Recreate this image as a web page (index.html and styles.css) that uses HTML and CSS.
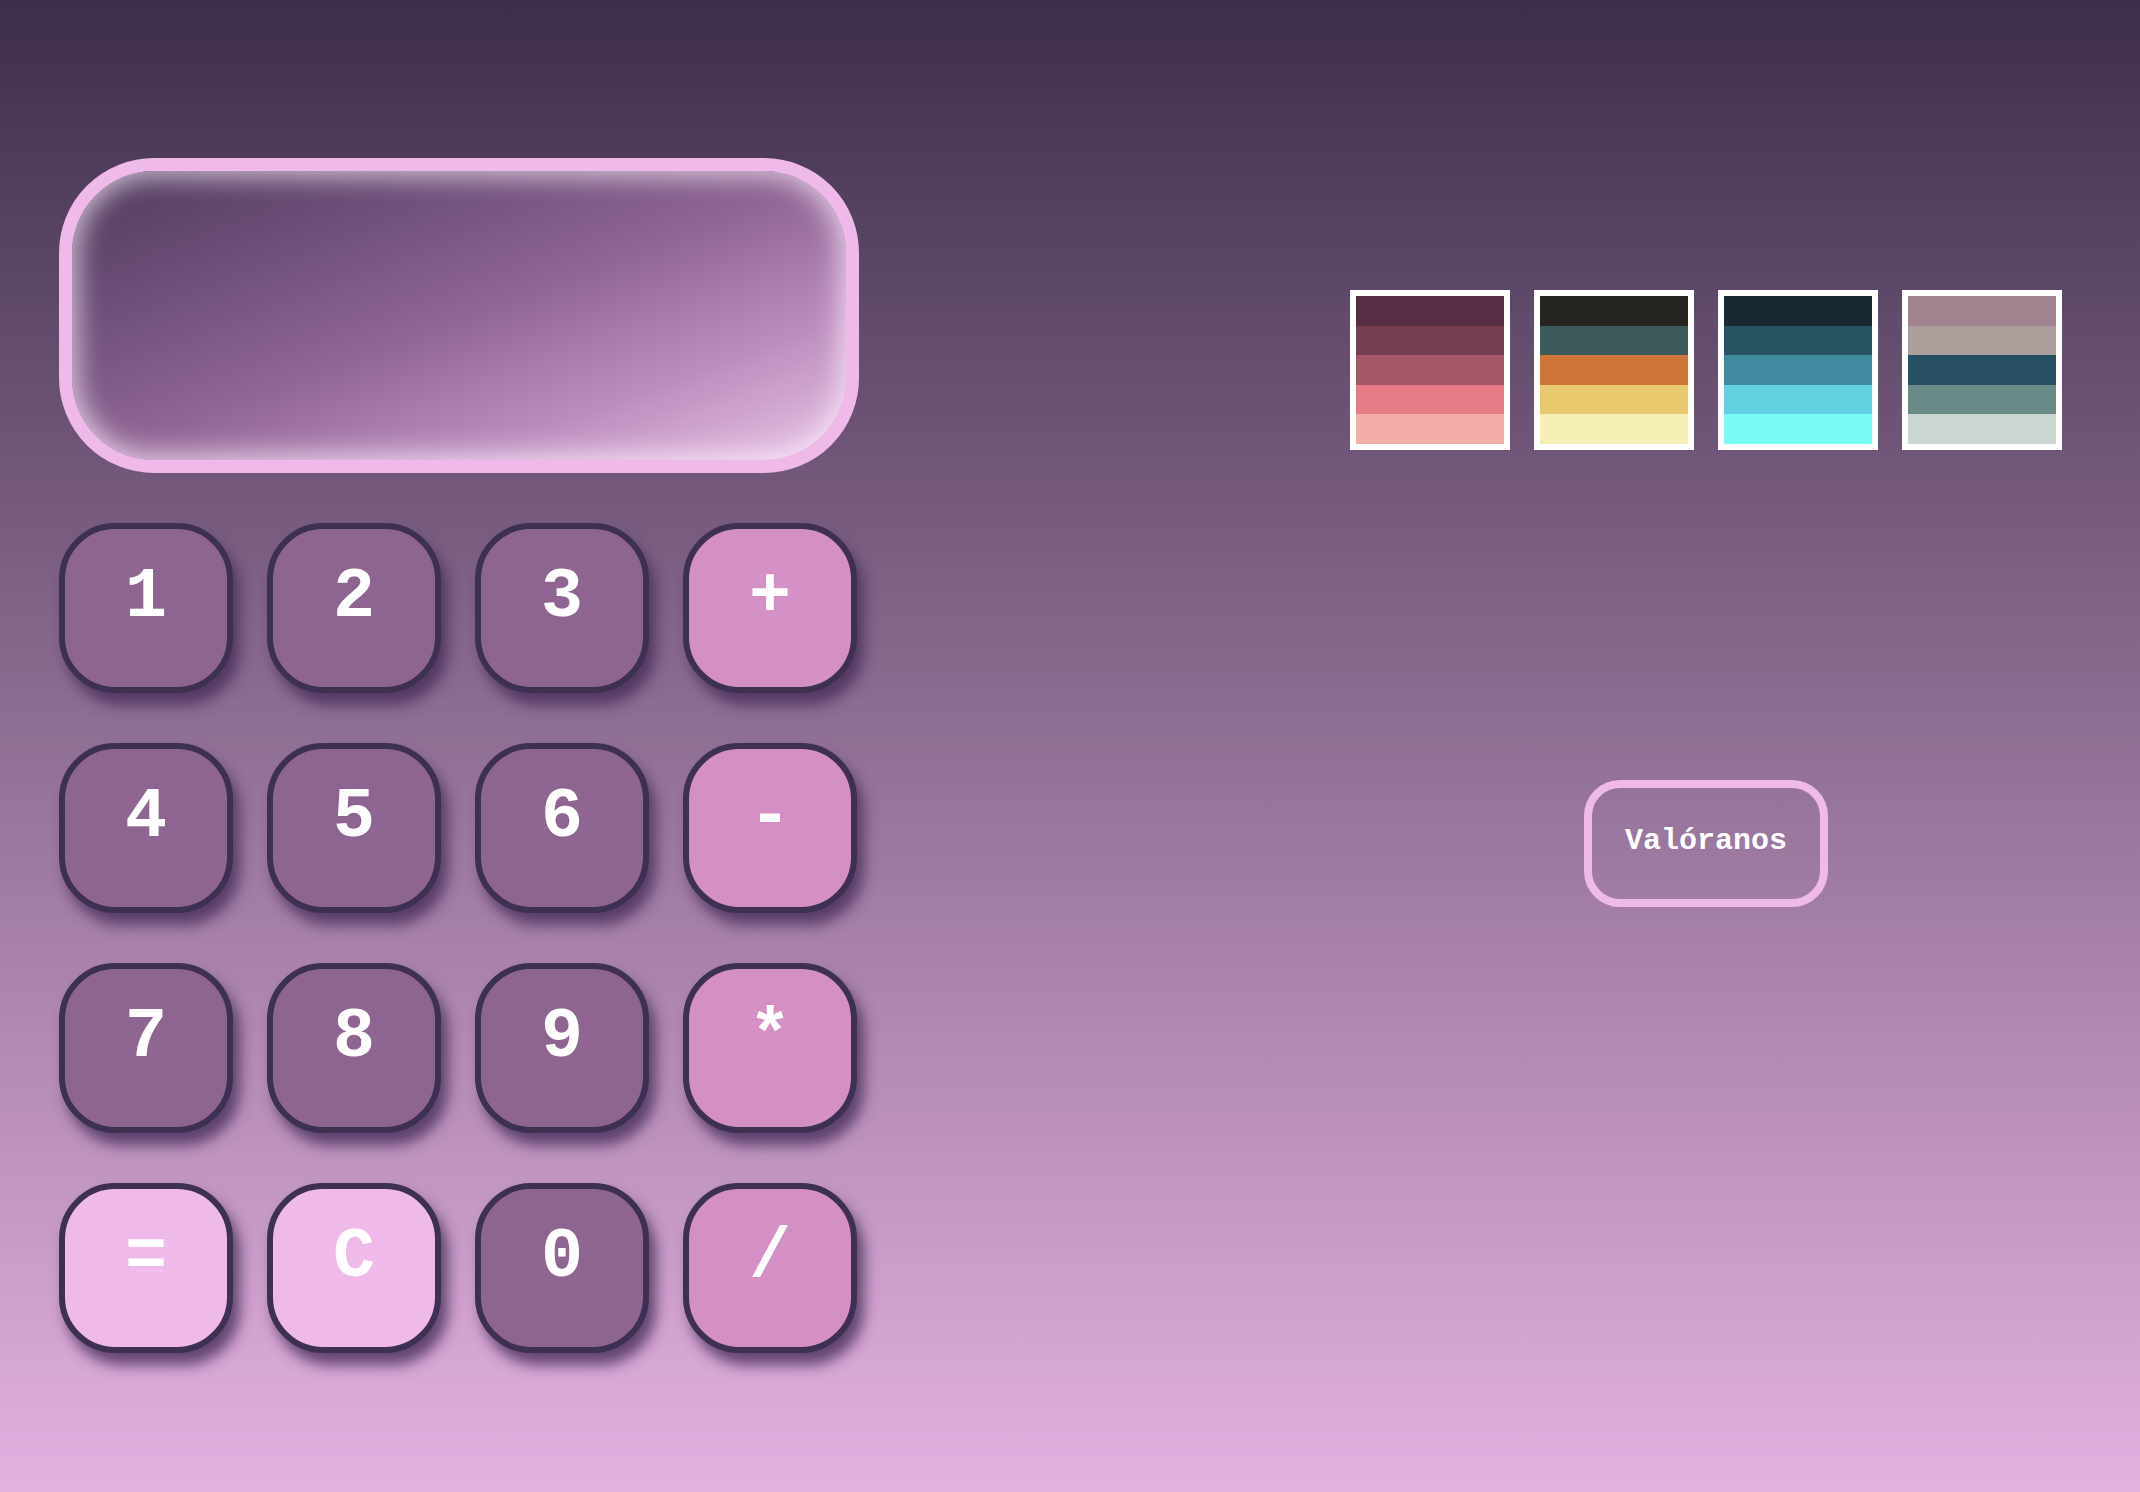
FILE: index.html
```html
<!DOCTYPE html>
<html lang="es">
<head>
<meta charset="utf-8">
<title>Calculadora</title>
<link rel="stylesheet" href="styles.css">
</head>
<body>
<main class="page">
  <section class="calc">
    <div class="display"></div>
    <div class="keys">
      <button class="key num">1</button>
      <button class="key num">2</button>
      <button class="key num">3</button>
      <button class="key op">+</button>
      <button class="key num">4</button>
      <button class="key num">5</button>
      <button class="key num">6</button>
      <button class="key op">-</button>
      <button class="key num">7</button>
      <button class="key num">8</button>
      <button class="key num">9</button>
      <button class="key op">*</button>
      <button class="key light">=</button>
      <button class="key light">C</button>
      <button class="key num">0</button>
      <button class="key op">/</button>
    </div>
  </section>
  <aside class="side">
    <div class="palettes">
      <div class="palette">
        <span style="background:#562d43"></span><span style="background:#773d51"></span><span style="background:#a65669"></span><span style="background:#e77c86"></span><span style="background:#f4aea8"></span>
      </div>
      <div class="palette">
        <span style="background:#262520"></span><span style="background:#3b5a59"></span><span style="background:#ce7537"></span><span style="background:#e8c96e"></span><span style="background:#f5efb6"></span>
      </div>
      <div class="palette">
        <span style="background:#182932"></span><span style="background:#265261"></span><span style="background:#3f8a9e"></span><span style="background:#62d2e3"></span><span style="background:#79fbf5"></span>
      </div>
      <div class="palette">
        <span style="background:#a0838f"></span><span style="background:#ab9e9a"></span><span style="background:#264f61"></span><span style="background:#6a8a88"></span><span style="background:#cbd6d0"></span>
      </div>
    </div>
    <button class="rate">Valóranos</button>
  </aside>
</main>
</body>
</html>
```

FILE: styles.css
```css
* { box-sizing: border-box; }
html, body { margin: 0; padding: 0; }
body {
  width: 2140px;
  height: 1492px;
  overflow: hidden;
  background: linear-gradient(to bottom, #3d2e4a 0%, #e4b1e1 100%);
  font-family: "Liberation Mono", "DejaVu Sans Mono", monospace;
}
.page {
  display: flex;
  align-items: flex-start;
}
.calc {
  padding: 158px 0 0 59px;
  width: 858px;
  flex: none;
}
.display {
  width: 800px;
  height: 315px;
  border: 13px solid #efb9ea;
  border-radius: 95px;
  background: linear-gradient(to bottom right, #4e3a5c 0%, #6c4e78 25%, #8f6594 50%, #bb8dbe 75%, #eac6e6 100%);
  box-shadow: inset 0 0 26px 6px rgba(255, 240, 255, 0.7);
  margin-bottom: 50px;
}
.keys {
  display: grid;
  grid-template-columns: repeat(4, 174px);
  grid-auto-rows: 170px;
  column-gap: 34px;
  row-gap: 50px;
}
.key {
  font-family: "Liberation Mono", "DejaVu Sans Mono", monospace;
  font-weight: bold;
  font-size: 70px;
  color: #ffffff;
  border: 6px solid #3d3050;
  border-radius: 56px;
  box-shadow: 7px 12px 14px rgba(70, 45, 90, 0.8);
  padding: 0 0 20px 0;
  display: flex;
  align-items: center;
  justify-content: center;
  line-height: 1;
}
.num { background: #8e6590; }
.op { background: #d48fc4; }
.light { background: #efb9e9; }
.side {
  margin-left: 492px;
  width: 712px;
  display: flex;
  flex-direction: column;
  align-items: center;
  padding-top: 290px;
}
.palettes {
  display: flex;
  gap: 24px;
}
.palette {
  width: 160px;
  height: 160px;
  border: 6px solid #ffffff;
  background: #ffffff;
  display: flex;
  flex-direction: column;
}
.palette span {
  flex: 1;
}
.rate {
  margin-top: 330px;
  width: 244px;
  height: 127px;
  border: 8px solid #efb9ea;
  border-radius: 36px;
  background: transparent;
  color: #ffffff;
  font-family: "Liberation Mono", "DejaVu Sans Mono", monospace;
  font-weight: bold;
  font-size: 30px;
  padding: 0 0 6px 0;
}
```
